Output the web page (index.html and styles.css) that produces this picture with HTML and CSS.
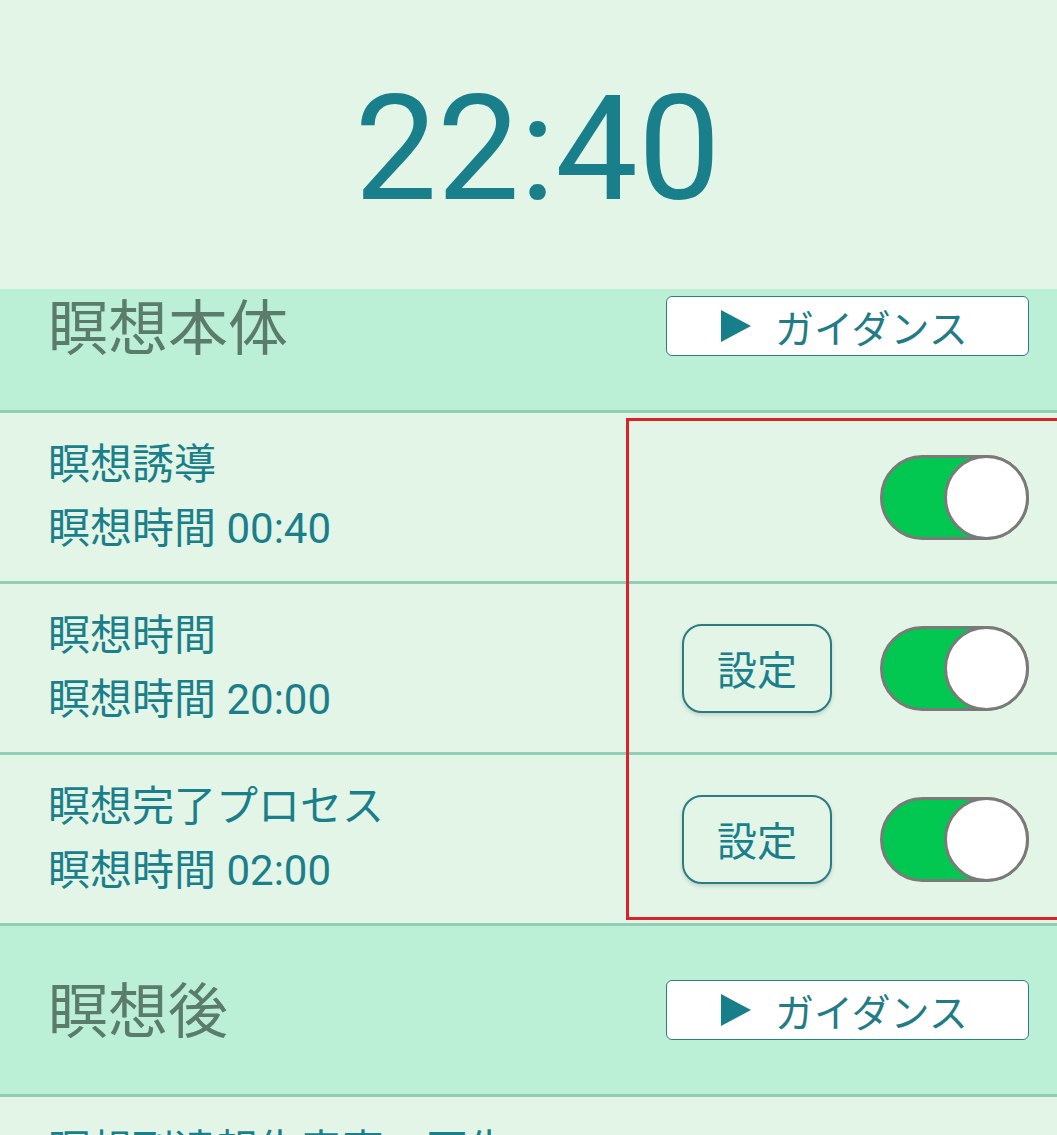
FILE: index.html
```html
<!DOCTYPE html>
<html lang="ja">
<head>
  <meta charset="UTF-8" />
  <meta name="viewport" content="width=device-width, initial-scale=1" />
  <title>瞑想タイマー</title>
  <link rel="stylesheet" href="styles.css">
</head>
<body>
  <div class="clock">22:40</div>

  <div class="section-head first">
    <h2>瞑想本体</h2>
    <button class="guide-btn">
      <svg class="play" viewBox="0 0 30 32" width="30" height="32"><polygon points="0,0 30,16 0,32" /></svg>
      <span>ガイダンス</span>
    </button>
  </div>

  <div class="list">
    <div class="row">
      <div class="row-text">
        <div>瞑想誘導</div>
        <div>瞑想時間 00:40</div>
      </div>
      <div class="row-controls">
        <label class="toggle on"><span class="knob"></span></label>
      </div>
    </div>
    <div class="row">
      <div class="row-text">
        <div>瞑想時間</div>
        <div>瞑想時間 20:00</div>
      </div>
      <div class="row-controls">
        <button class="set-btn">設定</button>
        <label class="toggle on"><span class="knob"></span></label>
      </div>
    </div>
    <div class="row">
      <div class="row-text">
        <div>瞑想完了プロセス</div>
        <div>瞑想時間 02:00</div>
      </div>
      <div class="row-controls">
        <button class="set-btn">設定</button>
        <label class="toggle on"><span class="knob"></span></label>
      </div>
    </div>
    <!-- annotation box -->
    <div class="highlight"></div>
  </div>

  <div class="section-head">
    <h2>瞑想後</h2>
    <button class="guide-btn">
      <svg class="play" viewBox="0 0 30 32" width="30" height="32"><polygon points="0,0 30,16 0,32" /></svg>
      <span>ガイダンス</span>
    </button>
  </div>

  <div class="list">
    <div class="row last">
      <div class="row-text">
        <div>瞑想到達報告音声の再生</div>
        <div>瞑想時間 01:00</div>
      </div>
    </div>
  </div>
</body>
</html>
```

FILE: styles.css
```css
body {
  margin: 0;
  background-color: #e2f5e7;
  font-family: Roboto, "Noto Sans CJK JP", sans-serif;
  color: #1a7f8a;
  overflow: hidden;
}
.clock {
  height: 289px;
  box-sizing: border-box;
  padding: 8px 0 0 18px;
  display: flex;
  align-items: center;
  justify-content: center;
  font-size: 147px;
  color: #19808b;
}
.section-head {
  background-color: #bbf0d7;
  height: 168px;
  display: flex;
  align-items: center;
  justify-content: space-between;
  padding: 0 28px 0 48px;
  border-bottom: 3px solid #92cdb5;
}
.section-head.first {
  align-items: flex-start;
  padding-top: 7px;
  box-sizing: border-box;
  height: 124px;
}
.section-head h2 {
  margin: 0;
  font-size: 60px;
  font-weight: normal;
  color: #5b7b6b;
  line-height: 72px;
}
.section-head.first h2 {
  margin-top: -2px;
}
.section-head:not(.first) h2 {
  margin-top: 6px;
}
.guide-btn {
  width: 363px;
  height: 60px;
  background: white;
  border: 1px solid #2b7d85;
  border-radius: 6px;
  display: flex;
  align-items: center;
  padding: 0 0 0 54px;
  gap: 24px;
  font-family: "Noto Sans CJK JP", sans-serif;
  font-size: 39px;
  color: #227c86;
  cursor: pointer;
}
.play {
  fill: #177f8a;
}
.list {
  position: relative;
}
.row {
  height: 168px;
  display: flex;
  align-items: center;
  justify-content: space-between;
  padding: 0 28px 0 48px;
  border-bottom: 3px solid #92cdb5;
}
.row.last {
  padding-top: 2px;
}
.row-text {
  font-size: 42px;
  line-height: 64px;
  color: #1a7f8a;
}
.row-controls {
  display: flex;
  align-items: center;
  gap: 48px;
}
.set-btn {
  width: 150px;
  height: 89px;
  border: 2px solid #2a7b84;
  border-radius: 20px;
  background-color: #e2f5e7;
  box-shadow: 0 2px 4px rgba(0,0,0,0.15);
  font-family: "Noto Sans CJK JP", sans-serif;
  font-size: 40px;
  color: #1a7f8a;
  cursor: pointer;
}
.toggle {
  display: block;
  position: relative;
  width: 149px;
  height: 85px;
  box-sizing: border-box;
  border: 3px solid #7a7a7a;
  border-radius: 43px;
  background-color: #aaa;
}
.toggle.on {
  background-color: #02c852;
}
.toggle .knob {
  position: absolute;
  top: -3px;
  right: -3px;
  width: 85px;
  height: 85px;
  box-sizing: border-box;
  border: 3px solid #7a7a7a;
  border-radius: 50%;
  background: white;
}
.highlight {
  position: absolute;
  left: 626px;
  top: 5px;
  width: 440px;
  height: 502px;
  box-sizing: border-box;
  border: 3px solid #dc2229;
  pointer-events: none;
}
```
